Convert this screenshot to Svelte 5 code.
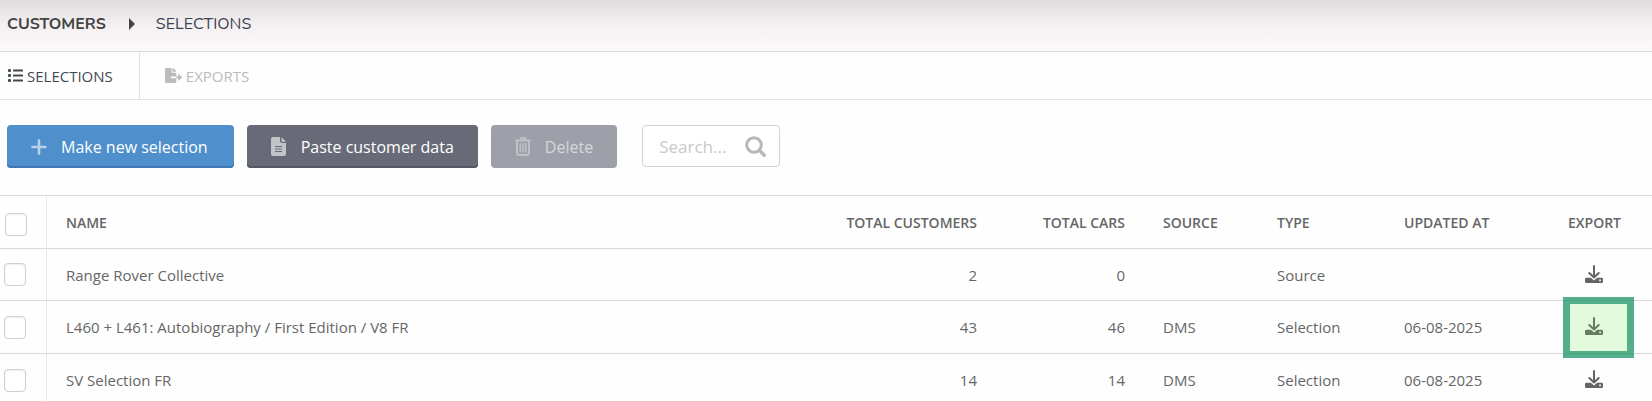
<script>
  const rows = [
    { name: 'Range Rover Collective', customers: 2, cars: 0, source: '', type: 'Source', updated: '', active: false },
    { name: 'L460 + L461: Autobiography / First Edition / V8 FR', customers: 43, cars: 46, source: 'DMS', type: 'Selection', updated: '06-08-2025', active: true },
    { name: 'SV Selection FR', customers: 14, cars: 14, source: 'DMS', type: 'Selection', updated: '06-08-2025', active: false },
  ];
</script>

<header class="crumbs">
  <a class="root" href="#customers">CUSTOMERS</a>
  <svg class="caret" width="6" height="12" viewBox="0 0 6 12" aria-hidden="true"><path d="M0 0l6 6-6 6z" fill="currentColor" /></svg>
  <a class="leaf" href="#selections">SELECTIONS</a>
</header>

<nav class="tabs">
  <a class="tab current" href="#selections">
    <svg width="15" height="13" viewBox="0 0 15 13" aria-hidden="true" fill="currentColor">
      <rect x="0" y="0" width="3" height="3" rx="1" /><rect x="0" y="5" width="3" height="3" rx="1" /><rect x="0" y="10" width="3" height="3" rx="1" />
      <rect x="5" y="0.5" width="10" height="2" rx="0.5" /><rect x="5" y="5.5" width="10" height="2" rx="0.5" /><rect x="5" y="10.5" width="10" height="2" rx="0.5" />
    </svg>
    SELECTIONS
  </a>
  <a class="tab" href="#exports">
    <svg width="17" height="15" viewBox="0 0 576 512" aria-hidden="true" fill="currentColor">
      <path d="M384 121.900c0-6.300-2.500-12.400-7-16.900L279.100 7c-4.500-4.500-10.600-7-17-7H256v128h128zM571 308l-95.700-96.400c-10.100-10.100-27.400-3-27.400 11.300V288h-64v64h64v65.200c0 14.300 17.300 21.400 27.400 11.300L571 332c6.600-6.600 6.600-17.400 0-24zM192 336v-32c0-8.800 7.200-16 16-16h176V160H248c-13.200 0-24-10.800-24-24V0H24C10.700 0 0 10.700 0 24v464c0 13.300 10.700 24 24 24h336c13.300 0 24-10.700 24-24V352H208c-8.800 0-16-7.200-16-16z" />
    </svg>
    EXPORTS
  </a>
</nav>

<main>
  <div class="toolbar">
    <button class="btn primary" type="button">
      <svg width="16" height="16" viewBox="0 0 16 16" aria-hidden="true"><path d="M8 1.500v13M1.500 8h13" stroke="currentColor" stroke-width="2.600" stroke-linecap="round" /></svg>
      Make new selection
    </button>
    <button class="btn dark" type="button">
      <svg width="16" height="19" viewBox="0 0 16 19" aria-hidden="true">
        <path d="M2 0h7v4a2 2 0 0 0 2 2h4v11a2 2 0 0 1-2 2H2a2 2 0 0 1-2-2V2a2 2 0 0 1 2-2zM10.500 0L15 4.800h-4.500z" fill="currentColor" />
        <path d="M4 9.500h7M4 12h7M4 14.500h7" stroke="#686b77" stroke-width="1" />
      </svg>
      Paste customer data
    </button>
    <button class="btn muted" type="button" disabled>
      <svg width="16" height="19" viewBox="0 0 16 19" aria-hidden="true" fill="none" stroke="currentColor">
        <path d="M0.800 3.500h14.400M5 3.300l1-2.300h4l1 2.300" stroke-width="1.800" stroke-linecap="round" />
        <path d="M2 4v12a2 2 0 0 0 2 2h8a2 2 0 0 0 2-2V4" stroke-width="2" />
        <path d="M5.300 6v9.500M8 6v9.500M10.700 6v9.500" stroke-width="1.500" />
      </svg>
      Delete
    </button>
    <label class="search">
      <input type="text" placeholder="Search..." aria-label="Search" />
      <svg width="21" height="21" viewBox="0 0 21 21" aria-hidden="true" fill="none" stroke="currentColor" stroke-linecap="round">
        <circle cx="9" cy="9" r="7.300" stroke-width="3" /><path d="M14.500 14.500l4.700 4.700" stroke-width="3.400" />
      </svg>
    </label>
  </div>

  <table>
    <colgroup>
      <col class="c-check" /><col /><col class="c-customers" /><col class="c-cars" /><col class="c-source" /><col class="c-type" /><col class="c-updated" /><col class="c-export" />
    </colgroup>
    <thead>
      <tr>
        <th class="check"><input type="checkbox" aria-label="Select all" /></th>
        <th>NAME</th>
        <th class="num">TOTAL CUSTOMERS</th>
        <th class="num">TOTAL CARS</th>
        <th>SOURCE</th>
        <th>TYPE</th>
        <th>UPDATED AT</th>
        <th class="export">EXPORT</th>
      </tr>
    </thead>
    <tbody>
      {#each rows as row}
        <tr>
          <td class="check"><input type="checkbox" aria-label={`Select ${row.name}`} /></td>
          <td>{row.name}</td>
          <td class="num">{row.customers}</td>
          <td class="num">{row.cars}</td>
          <td>{row.source}</td>
          <td>{row.type}</td>
          <td>{row.updated}</td>
          <td class="export">
            <button class="download" class:active={row.active} type="button" aria-label={`Export ${row.name}`}>
              <svg width="18" height="18" viewBox="0 0 18 18" aria-hidden="true">
                <path d="M9 1v11M4.300 8L9 12.400 13.700 8" fill="none" stroke="currentColor" stroke-width="2" stroke-linecap="round" stroke-linejoin="round" />
                <path d="M1.300 12.800h4.500L9 15.400l3.200-2.600h4.500A1.300 1.300 0 0 1 18 14v2.700a1.300 1.300 0 0 1-1.300 1.300H1.300A1.300 1.300 0 0 1 0 16.700V14a1.300 1.300 0 0 1 1.300-1.200zM14.200 14.500v1.700h1.700v-1.700z" fill="currentColor" fill-rule="evenodd" />
              </svg>
            </button>
          </td>
        </tr>
      {/each}
    </tbody>
  </table>
</main>

<style>
  :global(body) {
    margin: 0;
    background: #fefefe;
    color: #666;
    font-family: 'Open Sans', 'Noto Sans', sans-serif;
    font-size: 15px;
    overflow-x: hidden;
  }
  a { color: inherit; text-decoration: none; }
  svg { flex: none; display: block; }

  .crumbs {
    display: flex;
    align-items: center;
    box-sizing: border-box;
    height: 52px;
    padding: 0 7px 4px;
    border-bottom: 1px solid #d9d7d8;
    background: linear-gradient(#dedcdd, #f5f1f2 50%, #fdf9fa);
    font-family: Nunito, Lato, sans-serif;
    font-size: 16px;
    color: #444;
  }
  .root { font-weight: 700; }
  .caret { margin: 0 21px 0 23px; }
  .leaf { color: #3b4256; }

  .tabs {
    display: flex;
    height: 47px;
    border-bottom: 1px solid #e2e2e2;
  }
  .tab {
    display: flex;
    align-items: center;
    gap: 4px;
    padding: 0 25px;
    color: #bbb;
  }
  .tab.current {
    padding: 0 26px 0 8px;
    border-right: 1px solid #e2e2e2;
    color: #3e4a52;
  }

  .toolbar {
    display: flex;
    gap: 13px;
    padding: 25px 7px 27px;
  }
  .btn {
    display: flex;
    align-items: center;
    gap: 14px;
    box-sizing: border-box;
    height: 43px;
    padding: 0 24px;
    border: 0;
    border-radius: 4px;
    color: #fff;
    font: inherit;
    font-size: 16px;
  }
  .btn svg { opacity: 0.6; }
  .primary { padding-right: 26px; background: #4e8fcc; box-shadow: inset 0 -2px #3f78b3; }
  .dark { background: #686b77; box-shadow: inset 0 -2px #555763; }
  .muted { background: #9da0a8; color: #d6d7dc; }

  .search {
    display: flex;
    align-items: center;
    box-sizing: border-box;
    width: 138px;
    height: 42px;
    margin-left: 12px;
    padding: 0 13px 0 16px;
    border: 1px solid #d2d2d2;
    border-radius: 4px;
    background: #fff;
    color: #b9b8b8;
  }
  .search input {
    flex: 1;
    min-width: 0;
    padding: 0;
    border: 0;
    outline: 0;
    background: none;
    font: inherit;
    font-size: 17px;
  }
  .search input::placeholder { color: #c8c8c8; opacity: 1; }

  table {
    width: 100%;
    table-layout: fixed;
    border-collapse: separate;
    border-spacing: 0;
    border-top: 1px solid #d8d8d8;
  }
  .c-check { width: 47px; }
  .c-customers { width: 190px; }
  .c-cars { width: 148px; }
  .c-source { width: 114px; }
  .c-type { width: 127px; }
  .c-updated { width: 164px; }
  .c-export { width: 103px; }

  th, td {
    box-sizing: border-box;
    height: 53px;
    padding: 0 19px;
    border-bottom: 1px solid #d8d8d8;
    text-align: left;
    white-space: nowrap;
  }
  th { font-size: 14px; font-weight: 600; }
  tbody tr:first-child td { height: 52px; }
  tbody tr:last-child td { border-bottom: 0; height: 47px; padding-top: 5px; }
  .num { text-align: right; }
  .check { padding: 0 0 0 4px; border-right: 1px solid #e8e8e8; }
  th.check { padding: 4px 0 0 5px; }
  .check input {
    appearance: none;
    display: block;
    box-sizing: border-box;
    width: 22px;
    height: 23px;
    margin: 0;
    border: 1px solid #d0d0d0;
    border-radius: 4px;
    background: #fff;
    box-shadow: inset 0 1px 2px #eee;
  }
  .export { padding-right: 32px; text-align: center; }
  .download {
    position: relative;
    display: block;
    margin: 0 auto;
    padding: 0 0 2px;
    border: 0;
    background: none;
    color: #646464;
  }
  .download.active::after {
    content: '';
    position: absolute;
    box-sizing: border-box;
    left: -22px;
    top: -20px;
    width: 71px;
    height: 61px;
    border: 7px solid rgba(30, 145, 105, 0.73);
    background: rgba(100, 240, 70, 0.18);
  }
</style>
